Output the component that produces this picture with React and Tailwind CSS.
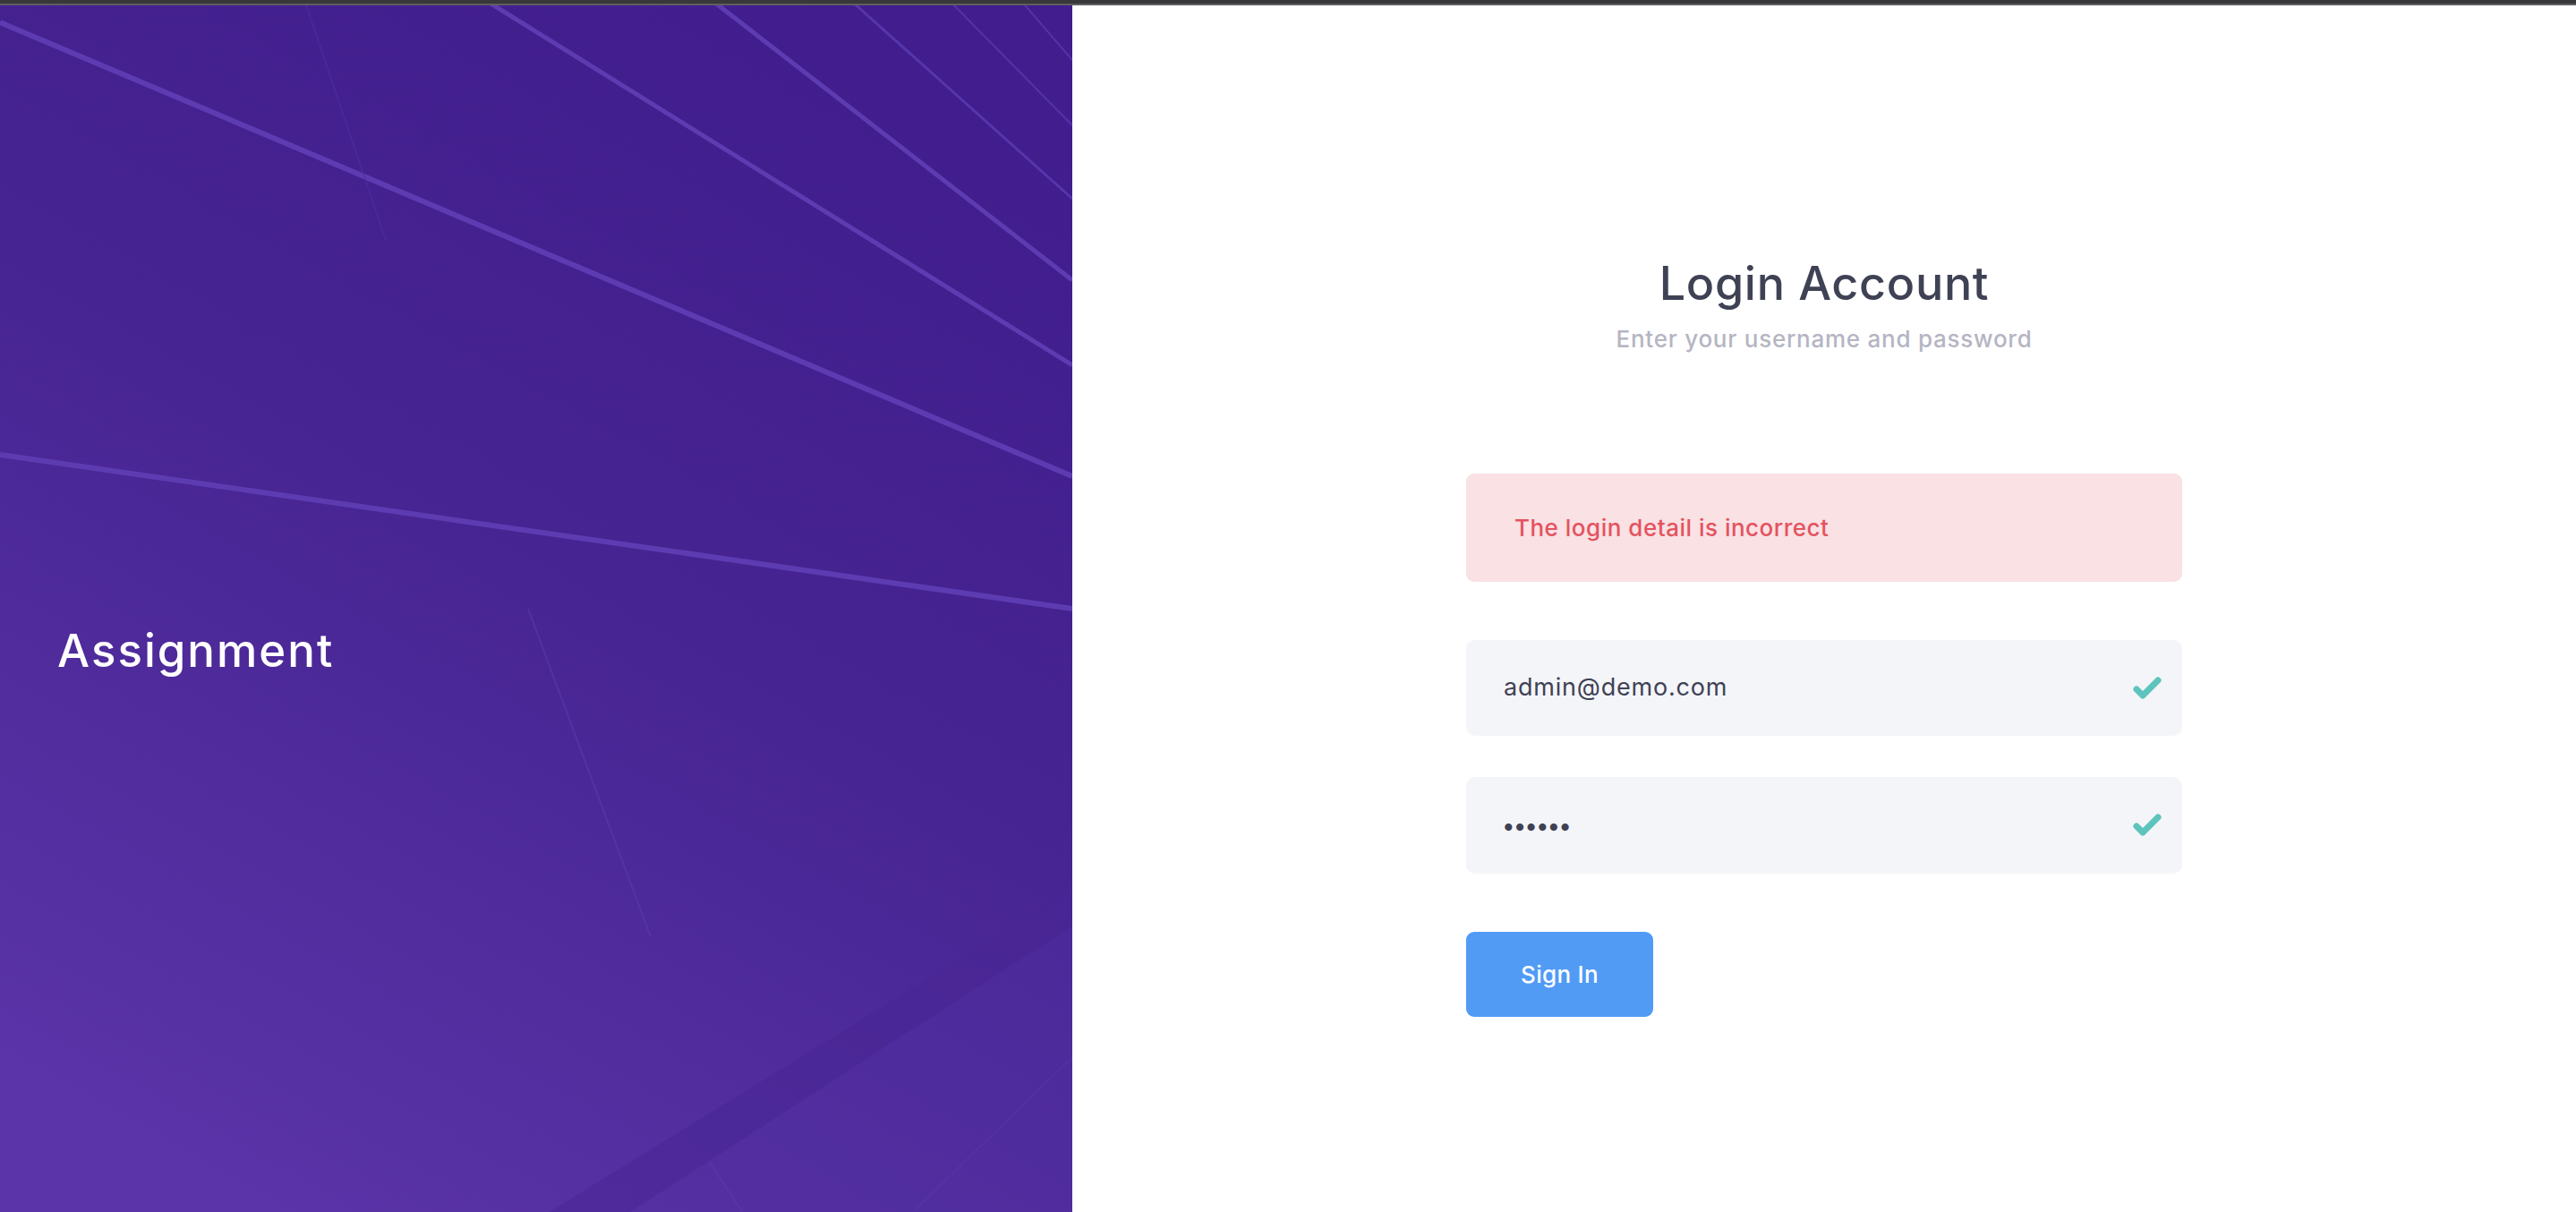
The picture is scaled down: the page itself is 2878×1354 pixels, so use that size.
import React from "react";

function Background() {
  return (
    <svg
      className="absolute inset-0 h-full w-full"
      viewBox="0 0 1198 1348"
      preserveAspectRatio="none"
    >
      <defs>
        <linearGradient id="bg" x1="0.75" y1="0" x2="0.25" y2="1">
          <stop offset="0" stopColor="#411d8d" />
          <stop offset="0.45" stopColor="#462491" />
          <stop offset="1" stopColor="#5a34a8" />
        </linearGradient>
      </defs>
      <rect x="0" y="0" width="1198" height="1348" fill="url(#bg)" />
      {/* dark diagonal band bottom right */}
      <polygon points="1198,988 1198,1028 704,1348 614,1348" fill="#4a2795" opacity="0.6" />
      <polygon points="1198,1028 1198,1348 829,1348 792,1291" fill="#5230a2" opacity="0.4" />
      <line x1="792" y1="1291" x2="829" y2="1348" stroke="#5b39ad" strokeWidth="2" opacity="0.6" />
      <line x1="1198" y1="1175" x2="1020" y2="1348" stroke="#5b39ad" strokeWidth="2" opacity="0.4" />
      {/* light streaks */}
      <line x1="0" y1="19" x2="1198" y2="526" stroke="#5d3cb2" strokeWidth="6" />
      <line x1="0" y1="502" x2="1198" y2="674" stroke="#5d3cb2" strokeWidth="6" />
      <line x1="542" y1="-6" x2="1198" y2="402" stroke="#5d3cb2" strokeWidth="5" />
      <line x1="795" y1="-6" x2="1198" y2="307" stroke="#5d3cb2" strokeWidth="5" />
      <line x1="950" y1="-6" x2="1198" y2="216" stroke="#5636ab" strokeWidth="3" />
      <line x1="1060" y1="-6" x2="1198" y2="134" stroke="#5334a8" strokeWidth="2" />
      <line x1="1140" y1="-6" x2="1198" y2="61" stroke="#5334a8" strokeWidth="2" />
      <line x1="340" y1="-6" x2="431" y2="262" stroke="#4d2da2" strokeWidth="2" opacity="0.6" />
      <line x1="590" y1="674" x2="727" y2="1041" stroke="#5a3aad" strokeWidth="2" opacity="0.6" />
    </svg>
  );
}

function Check() {
  return (
    <svg width="34" height="28" viewBox="0 0 34 28" fill="none">
      <polyline
        points="5,15 12,22 29,5"
        stroke="#5cc4bc"
        strokeWidth="7"
        strokeLinecap="round"
        strokeLinejoin="round"
      />
    </svg>
  );
}

export default function App() {
  const font = { fontFamily: "Inter, 'Noto Sans', sans-serif" };
  return (
    <div className="flex h-[1354px] w-[2878px] flex-col overflow-hidden bg-white" style={font}>
      <div className="h-[6px] w-full border-b-2 border-[#5e5e60] bg-[#38383a]" />
      <div className="flex flex-1">
        <div className="relative w-[1198px] shrink-0 overflow-hidden">
          <Background />
          <div className="relative pl-[64px] pt-[695px]">
            <div className="text-[51px] leading-[52px] font-medium tracking-[2px] text-white">
              Assignment
            </div>
          </div>
        </div>
        <div className="flex flex-1 justify-center">
          <div className="flex w-[800px] flex-col">
            <div className="mt-[284px] text-center text-[52px] leading-[53px] font-medium tracking-[0.7px] text-[#3f4254]">
              Login Account
            </div>
            <div className="mt-[23px] text-center text-[26px] leading-[26px] font-medium tracking-[0.75px] text-[#b5b5c3]">
              Enter your username and password
            </div>
            <div className="mt-[137px] flex h-[121px] items-center rounded-[9px] bg-[#f9e1e4] px-[54px] text-[26px] font-medium tracking-[0.5px] text-[#e4535f]">
              The login detail is incorrect
            </div>
            <div className="mt-[65px] flex h-[107px] items-center justify-between rounded-[10px] bg-[#f4f5f9] pl-[42px] pr-[22px]">
              <span className="text-[27px] tracking-[0.8px] text-[#3f4254]">admin@demo.com</span>
              <Check />
            </div>
            <div className="mt-[46px] flex h-[108px] items-center justify-between rounded-[10px] bg-[#f4f5f9] pl-[40px] pr-[22px]">
              <span className="text-[26px] tracking-[-2px] text-[#3f4254]">••••••</span>
              <Check />
            </div>
            <div>
              <button className="mt-[65px] flex h-[95px] w-[209px] items-center justify-center rounded-[9px] bg-[#519bf5] text-[26px] font-medium tracking-[0.3px] text-white">
                Sign In
              </button>
            </div>
          </div>
        </div>
      </div>
    </div>
  );
}
